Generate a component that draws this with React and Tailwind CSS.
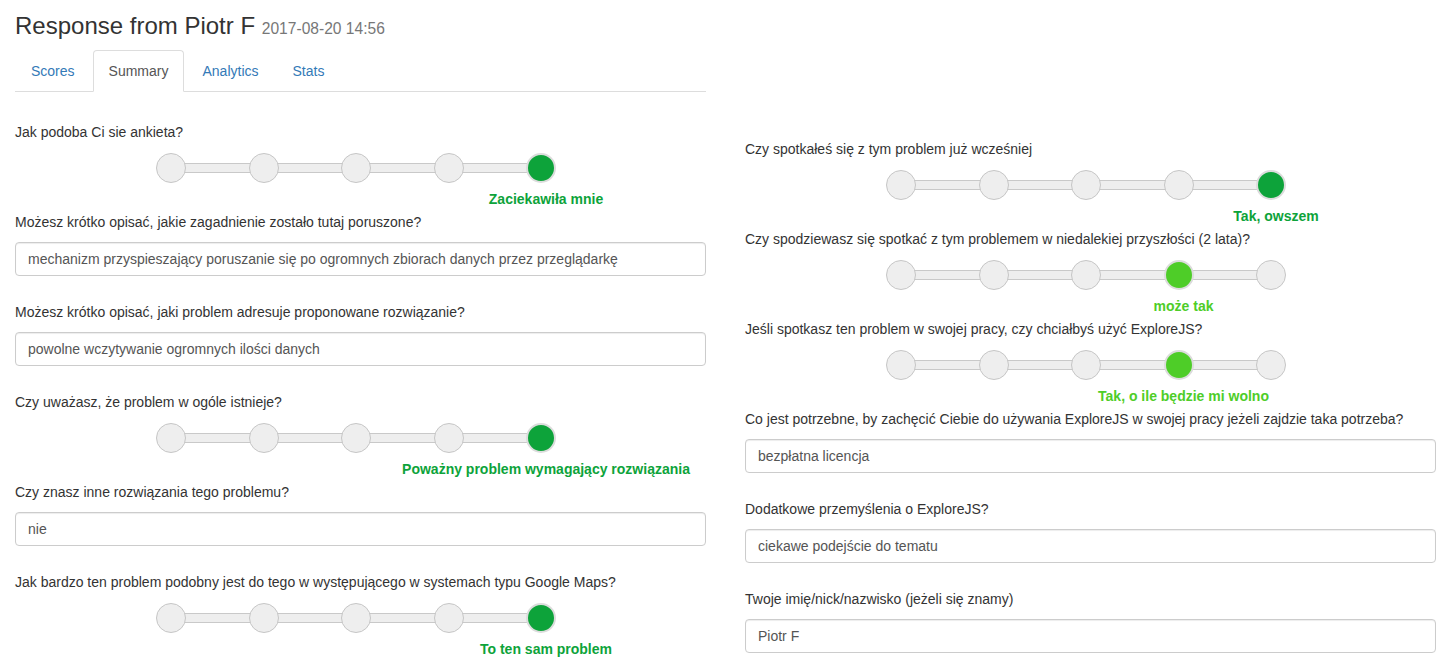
import React from "react";

const DARK = "dark";
const LIGHT = "light";

const left = [
  { type: "scale", q: "Jak podoba Ci sie ankieta?", value: 4, answer: "Zaciekawiła mnie", tone: DARK },
  { type: "text", q: "Możesz krótko opisać, jakie zagadnienie zostało tutaj poruszone?", answer: "mechanizm przyspieszający poruszanie się po ogromnych zbiorach danych przez przeglądarkę" },
  { type: "text", q: "Możesz krótko opisać, jaki problem adresuje proponowane rozwiązanie?", answer: "powolne wczytywanie ogromnych ilości danych" },
  { type: "scale", q: "Czy uważasz, że problem w ogóle istnieje?", value: 4, answer: "Poważny problem wymagający rozwiązania", tone: DARK },
  { type: "text", q: "Czy znasz inne rozwiązania tego problemu?", answer: "nie" },
  { type: "scale", q: "Jak bardzo ten problem podobny jest do tego w występującego w systemach typu Google Maps?", value: 4, answer: "To ten sam problem", tone: DARK },
];

const right = [
  { type: "scale", q: "Czy spotkałeś się z tym problem już wcześniej", value: 4, answer: "Tak, owszem", tone: DARK },
  { type: "scale", q: "Czy spodziewasz się spotkać z tym problemem w niedalekiej przyszłości (2 lata)?", value: 3, answer: "może tak", tone: LIGHT },
  { type: "scale", q: "Jeśli spotkasz ten problem w swojej pracy, czy chciałbyś użyć ExploreJS?", value: 3, answer: "Tak, o ile będzie mi wolno", tone: LIGHT },
  { type: "text", q: "Co jest potrzebne, by zachęcić Ciebie do używania ExploreJS w swojej pracy jeżeli zajdzie taka potrzeba?", answer: "bezpłatna licencja" },
  { type: "text", q: "Dodatkowe przemyślenia o ExploreJS?", answer: "ciekawe podejście do tematu" },
  { type: "text", q: "Twoje imię/nick/nazwisko (jeżeli się znamy)", answer: "Piotr F" },
];

function Scale({ value, answer, tone }) {
  const fill = tone === DARK ? "bg-[#0da33a]" : "bg-[#4ecd28]";
  const text = tone === DARK ? "text-[#0da33a]" : "text-[#4ecd28]";
  // circle centres: 15px + i * 92.5px inside a 400px track
  const centre = 15 + value * 92.5 + 5;
  return (
    <div className="ml-[141px] w-[400px]">
      <div className="relative h-[30px] mt-[11px]">
        <div className="absolute left-[15px] right-[15px] top-[10px] h-[10px] bg-[#eeeeee] border border-[#c9c9c9]" />
        <div className="relative flex justify-between">
          {[0, 1, 2, 3, 4].map((i) => (
            <span
              key={i}
              className={[
                "block h-[30px] w-[30px] rounded-full border",
                i === value
                  ? `${fill} border-[#dcdcdc] border-2`
                  : "bg-[#eeeeee] border-[#c6c6c6] border-[1.5px]",
              ].join(" ")}
            />
          ))}
        </div>
      </div>
      <div className="relative h-[20px] mt-[6px] mb-[3px]">
        <span
          className={`absolute top-0 -translate-x-1/2 whitespace-nowrap font-bold ${text}`}
          style={{ left: centre }}
        >
          {answer}
        </span>
      </div>
    </div>
  );
}

function Question({ item }) {
  return (
    <div className="h-[90px]">
      <div className="h-[20px]">{item.q}</div>
      {item.type === "scale" ? (
        <Scale value={item.value} answer={item.answer} tone={item.tone} />
      ) : (
        <div className="mt-[10px] h-[34px] border border-[#cccccc] rounded-[4px] px-[12px] flex items-center text-[#555555] shadow-[inset_0_1px_1px_rgba(0,0,0,0.075)]">
          {item.answer}
        </div>
      )}
    </div>
  );
}

const tabs = ["Scores", "Summary", "Analytics", "Stats"];

export default function App() {
  return (
    <div className="min-h-[661px] bg-white text-[14px] leading-[20px] text-[#333333] font-['Liberation_Sans',Arial,sans-serif] pl-[15px] flex gap-[39px]">
      <div className="w-[691px]">
        <h3 className="mt-[13px] text-[24px] leading-[26.4px] text-[#333333]">
          Response from Piotr F{" "}
          <small className="text-[15.6px] text-[#777777]">2017-08-20 14:56</small>
        </h3>
        <ul className="mt-[8px] flex border-b border-[#dddddd]">
          {tabs.map((t) => (
            <li key={t} className="mr-[2px] -mb-px">
              <span
                className={[
                  "block px-[15px] py-[10px] rounded-t-[4px] border",
                  t === "Summary"
                    ? "border-[#dddddd] border-b-white bg-white text-[#555555]"
                    : "border-transparent text-[#337ab7]",
                ].join(" ")}
              >
                {t}
              </span>
            </li>
          ))}
        </ul>
        <div className="mt-[30px]">
          {left.map((item) => (
            <Question key={item.q} item={item} />
          ))}
        </div>
      </div>
      <div className="w-[691px] pt-[139px]">
        {right.map((item) => (
          <Question key={item.q} item={item} />
        ))}
      </div>
    </div>
  );
}
